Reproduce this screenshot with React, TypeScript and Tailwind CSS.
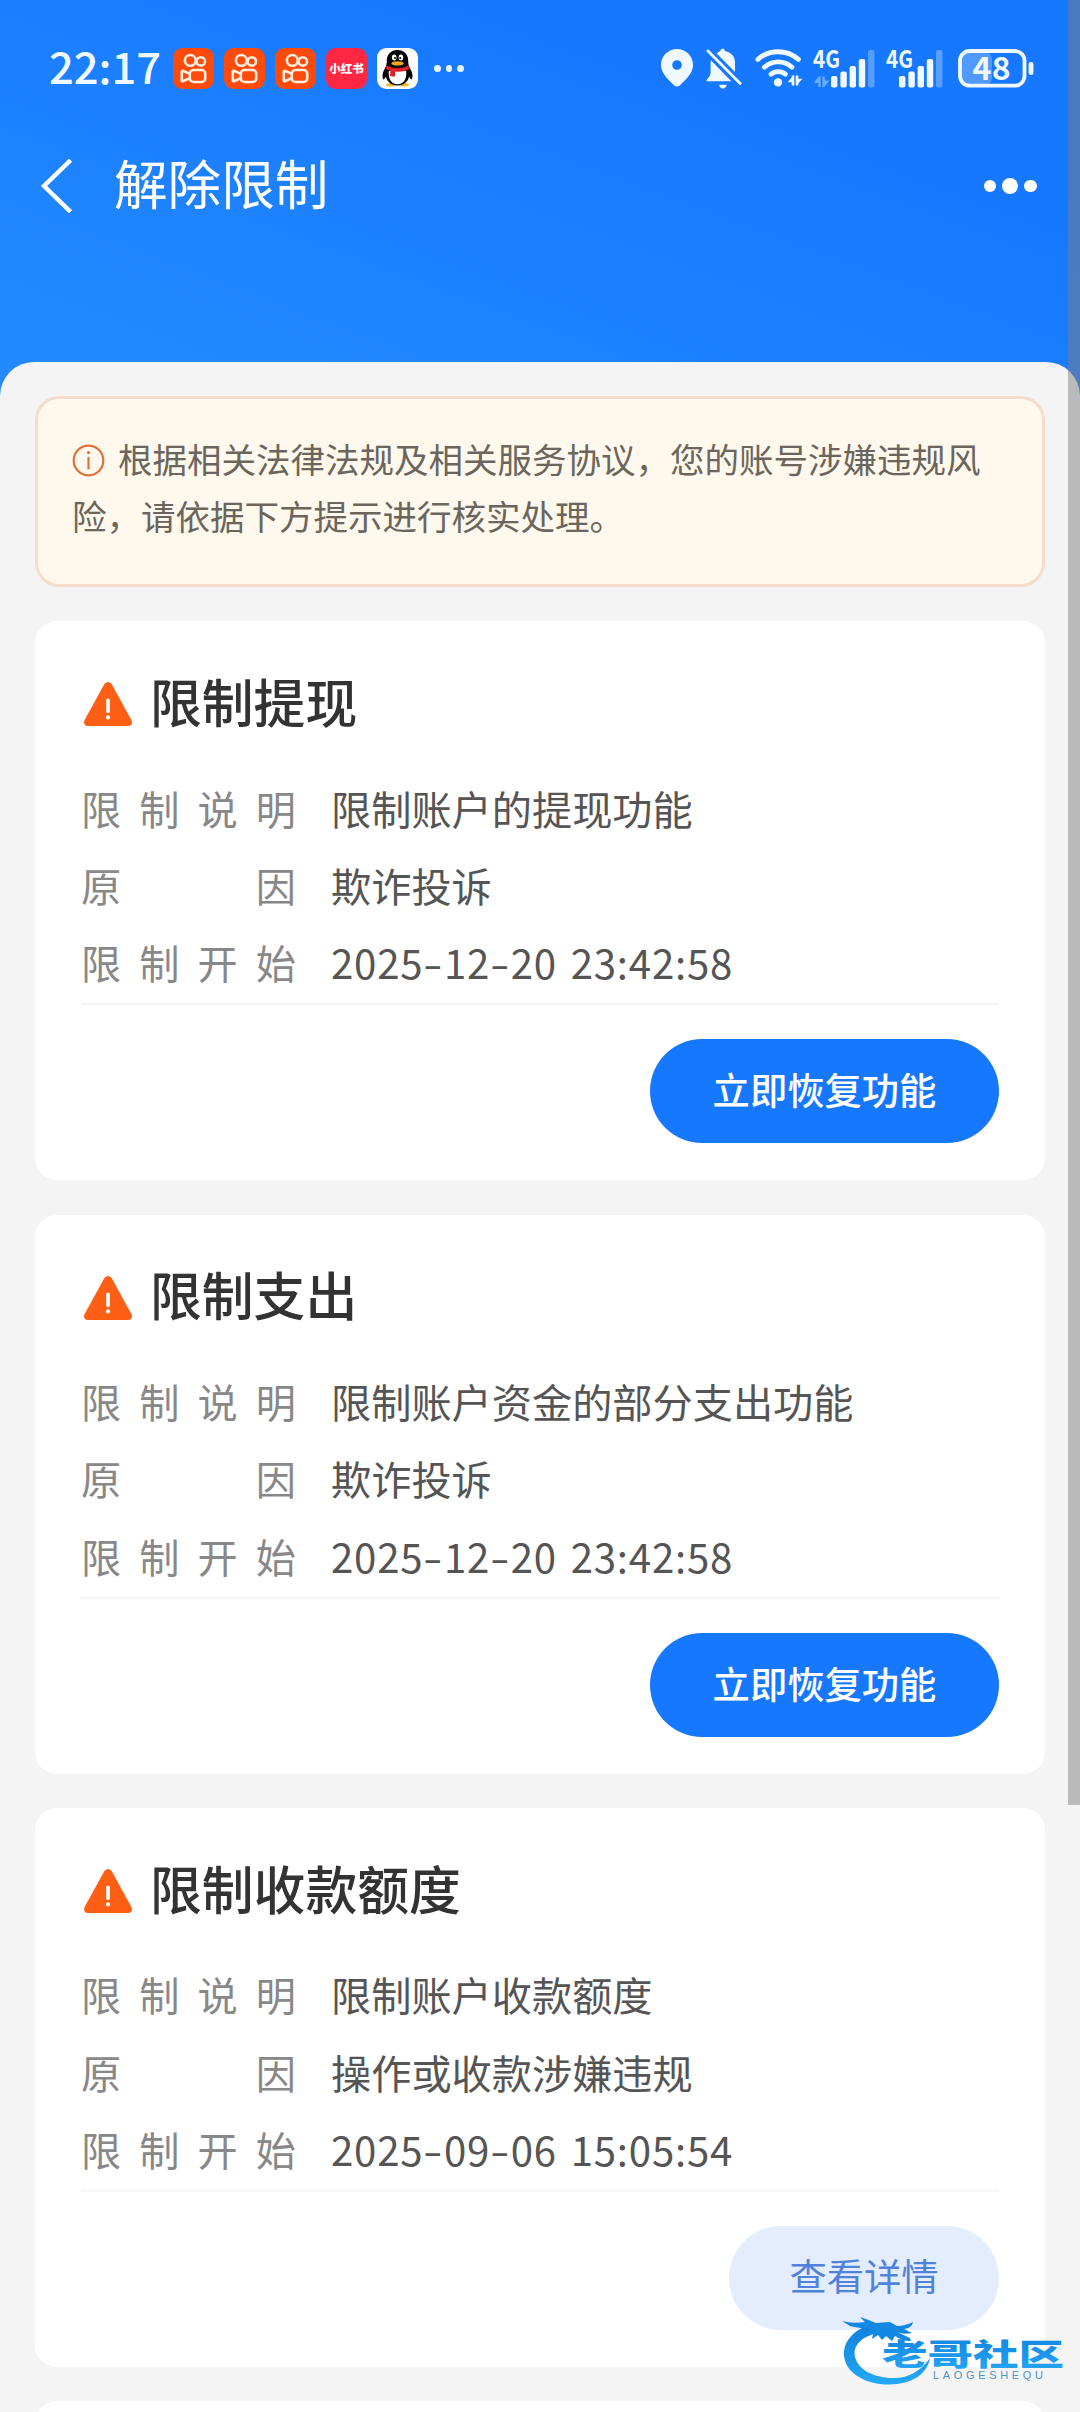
import React from 'react';

const FONT = "font-['Noto_Sans_CJK_SC','Noto_Sans',sans-serif]";
const PAGE_CLASSES = `relative w-[1080px] h-[2412px] overflow-hidden bg-[#f4f4f4] ${FONT}`;
const HEADER_CLASSES = 'h-[400px] bg-linear-to-tr from-[#2389ff] from-10% to-[#1677ff] to-75%';
const CARD_CLASSES = 'h-[559.2px] shrink-0 rounded-[22px] bg-white pl-[46px] pr-[46px] flex flex-col';
const PRIMARY_BUTTON = 'h-[104px] w-[349px] pb-[2px] rounded-full bg-[#1677ff] text-white text-[37.3px] font-medium';
const PLAIN_BUTTON = 'h-[104px] w-[270px] pb-[4px] rounded-full bg-[#e3edfe] text-[#5082db] text-[37.3px]';

type Restriction = {
  title: string;
  desc: string;
  reason: string;
  start: string;
  action: string;
  primary: boolean;
};

const RESTRICTIONS: Restriction[] = [
  {
    title: '限制提现',
    desc: '限制账户的提现功能',
    reason: '欺诈投诉',
    start: '2025-12-20 23:42:58',
    action: '立即恢复功能',
    primary: true,
  },
  {
    title: '限制支出',
    desc: '限制账户资金的部分支出功能',
    reason: '欺诈投诉',
    start: '2025-12-20 23:42:58',
    action: '立即恢复功能',
    primary: true,
  },
  {
    title: '限制收款额度',
    desc: '限制账户收款额度',
    reason: '操作或收款涉嫌违规',
    start: '2025-09-06 15:05:54',
    action: '查看详情',
    primary: false,
  },
];

const KuaishouIcon = () => (
  <svg width="41" height="41" viewBox="0 0 41 41" fill="none" stroke="#ffeedd" strokeWidth="2.6">
    <rect width="41" height="41" rx="9.5" fill="#fe4a0b" stroke="none" />
    <circle cx="17.3" cy="12.4" r="5.4" />
    <circle cx="27.8" cy="13.4" r="4.2" />
    <rect x="16.8" y="22" width="15.4" height="12" rx="3.6" />
    <path d="M16.5 25.6L9.8 22.8Q8.8 22.6 8.8 23.8V32.4Q8.8 33.6 9.8 33.2L16.5 30.2" strokeLinejoin="round" />
  </svg>
);

const XhsIcon = () => (
  <div className="size-[41px] rounded-[9.5px] bg-[#ff2742] flex items-center justify-center">
    <span className="text-white text-[11.5px] leading-none font-black whitespace-nowrap">小红书</span>
  </div>
);

const QQIcon = () => (
  <svg width="41" height="41" viewBox="0 0 41 41">
    <rect width="41" height="41" rx="9.5" fill="#fff" />
    <ellipse cx="14" cy="36.8" rx="5" ry="1.8" fill="#f5b52a" />
    <ellipse cx="27" cy="36.8" rx="5" ry="1.8" fill="#f5b52a" />
    <path d="M20.5 2C14 2 9.8 6.5 9.8 12.5C9.8 16 9.3 18 7.6 21C5.6 24.5 4.9 28 6 31C6.6 32.4 8 30 9 28.8C9.8 33.5 14 37.5 20.5 37.5S31.2 33.5 32 28.8C33 30 34.4 32.4 35 31C36.1 28 35.4 24.5 33.4 21C31.7 18 31.2 16 31.2 12.5C31.2 6.5 27 2 20.5 2Z" fill="#050505" />
    <path d="M11.8 23C11 31 14.5 36.3 20.5 36.3S30 31 29.2 23Z" fill="#fff" />
    <path d="M9.6 17.6C15.5 21 25.5 21 31.4 17.6L32.2 21C29 23.3 24 24.2 18 23.6V28.3C16 28.8 14.5 28.5 13 27.8L13.4 22.8C11.4 22.2 10 21.6 9 20.8Z" fill="#e2202c" />
    <ellipse cx="17.2" cy="9.6" rx="2.3" ry="3" fill="#fff" />
    <ellipse cx="23.9" cy="9.6" rx="2.3" ry="3" fill="#fff" />
    <circle cx="18" cy="10" r="1" fill="#000" />
    <circle cx="23.2" cy="10" r="1" fill="#000" />
    <ellipse cx="20.5" cy="15.4" rx="6.2" ry="2.2" fill="#f5a71c" />
  </svg>
);

const PinIcon = () => (
  <svg width="32" height="38" viewBox="0 0 32 38" fill="#f0f9ff">
    <path fillRule="evenodd" d="M16 0C7.2 0 0 7 0 15.8C0 24.5 7.5 31 13.2 36.4Q16 38.6 18.8 36.4C24.5 31 32 24.5 32 15.8C32 7 24.8 0 16 0ZM16 11.2A4.8 4.8 0 1 1 16 20.8A4.8 4.8 0 1 1 16 11.2Z" />
  </svg>
);

const BellOffIcon = () => (
  <svg width="36" height="41" viewBox="0 0 36 41" fill="#f0f9ff">
    <path d="M5.2 12.4L25.4 33.2H1.2Q0 33.2 0.6 31.8Q4.6 27.9 4.6 24V14Z" />
    <path d="M10.6 5.6Q12.6 3.4 14.2 2.9Q14.6 0.4 16.6 0.4T19 2.9C25.4 4.2 29 8.6 29 14.4V24Z" />
    <path d="M13.2 36.8H20.6Q20 40.6 16.9 40.6T13.2 36.8Z" />
    <path d="M2 3L34.2 35.4" stroke="#f0f9ff" strokeWidth="2.8" strokeLinecap="round" />
  </svg>
);

const WifiIcon = () => (
  <svg width="48" height="38" viewBox="0 0 48 38" fill="none" stroke="#f0f9ff" strokeWidth="4.8" strokeLinecap="round">
    <path d="M2.8 10.4C14 0.2 32 0.2 43.4 10.4" />
    <path d="M9.4 18.2C17 11 29.4 11 37 18.2" />
    <path d="M16 25.2C20 21.8 26.4 21.8 30.4 25.2" />
    <circle cx="23" cy="33.4" r="4.2" fill="#f0f9ff" stroke="none" />
    <path d="M38 26.6V36.4M42 36.4V26.6" strokeWidth="2.6" strokeLinecap="butt" />
    <path d="M32.6 33.2L38 27V33.2ZM47.4 29.8L42 36V29.8Z" fill="#f0f9ff" stroke="none" />
  </svg>
);

// bars share one shape, the first SIM also shows the (idle) data arrows
const SignalIcon = ({ arrows }: { arrows?: boolean }) => (
  <svg className="overflow-visible" width={arrows ? 62 : 57} height="39" viewBox={arrows ? '0 0 62 39' : '0 0 57 39'} fill="#f0f9ff">
    <text x="0" y="19.4" fontSize="24.5" fontWeight="700" textLength="27" lengthAdjust="spacingAndGlyphs">4G</text>
    {arrows && (
      <path opacity="0.4" d="M0.8 34L5.6 27.4H7.6V38H5.2V34ZM9.4 27.4H11.8V31.4H16.2L11.4 38H9.4Z" />
    )}
    <g transform={arrows ? undefined : 'translate(-5 0)'}>
      <rect x="18" y="27" width="6.4" height="11.4" rx="2" />
      <rect x="27.4" y="22.6" width="6.4" height="15.8" rx="2" />
      <rect x="36.6" y="17" width="6.4" height="21.4" rx="2" />
      <rect x="45.8" y="10" width="6.4" height="28.4" rx="2" />
      <rect x="55" y="1" width="6.4" height="37.4" rx="2" opacity="0.3" />
    </g>
  </svg>
);

const BatteryIcon = () => (
  <svg className="overflow-visible" width="77" height="39" viewBox="0 0 77 39">
    <rect x="3" y="3" width="31" height="33" rx="7" fill="#fff" fillOpacity="0.25" />
    <rect x="2" y="2" width="64.5" height="34.6" rx="9.5" fill="none" stroke="#f0f9ff" strokeWidth="3.8" />
    <rect x="70.6" y="13" width="4.8" height="13" rx="2.2" fill="#f0f9ff" />
    <text x="33.6" y="31" fontSize="32" fontWeight="700" fill="#f0f9ff" textAnchor="middle" textLength="38">48</text>
  </svg>
);

const StatusBar = () => (
  <div className="h-[137px] pl-[49px] flex items-center">
    <span className="w-[124px] pb-[6px] text-[43.5px] leading-none font-medium text-[#f0f9ff]">22:17</span>
    <div className="flex gap-[10px]">
      <KuaishouIcon />
      <KuaishouIcon />
      <KuaishouIcon />
      <XhsIcon />
      <QQIcon />
    </div>
    <div className="ml-[16px] flex gap-[5px]">
      <i className="size-[6.5px] rounded-full bg-[#e6f4ff]" />
      <i className="size-[6.5px] rounded-full bg-[#e6f4ff]" />
      <i className="size-[6.5px] rounded-full bg-[#e6f4ff]" />
    </div>
    <div className="ml-auto pr-[45px] pb-px flex items-center">
      <PinIcon />
      <div className="ml-[13px]"><BellOffIcon /></div>
      <div className="ml-[13px]"><WifiIcon /></div>
      <div className="ml-[10px]"><SignalIcon arrows /></div>
      <div className="ml-[11px]"><SignalIcon /></div>
      <div className="ml-[15px]"><BatteryIcon /></div>
    </div>
  </div>
);

const NavBar = () => (
  <div className="h-[98px] pl-[40px] pr-[43px] flex items-center">
    <svg width="33" height="54" viewBox="0 0 33 54" fill="none" stroke="#fff" strokeWidth="4.4">
      <path d="M30.6 1.2L4 27L30.6 52.8" />
    </svg>
    <h1 className="ml-[41px] pb-[9px] text-[53.6px] leading-none text-white">解除限制</h1>
    <div className="ml-auto flex items-center gap-[6px]">
      <i className="size-[12.6px] rounded-full bg-white" />
      <i className="size-[16px] rounded-full bg-white" />
      <i className="size-[12.6px] rounded-full bg-white" />
    </div>
  </div>
);

const Notice = () => (
  <section className="h-[191px] shrink-0 rounded-[24px] border-[3px] border-[#f6dccb] bg-[#fff8ec] pl-[34px] pr-[30px] pt-[31px]">
    <p className="text-[34.5px] leading-[57px] text-[#6a665d]">
      <svg className="inline-block align-[-3.5px] mr-[13px]" width="33" height="33" viewBox="0 0 33 33" fill="none" stroke="#e2703a" strokeWidth="2.2">
        <circle cx="16.5" cy="16.5" r="14.8" />
        <path d="M16.5 13V25.4" />
        <circle cx="16.5" cy="8.6" r="1.6" fill="#e2703a" stroke="none" />
      </svg>
      根据相关法律法规及相关服务协议，您的账号涉嫌违规风
      <br />
      险，请依据下方提示进行核实处理。
    </p>
  </section>
);

const WarningIcon = () => (
  <svg width="50" height="44" viewBox="0 0 50 44">
    <path d="M21.4 2Q25 -2 28.6 2L48.4 38Q50.4 43.6 45 44H5Q-0.4 43.6 1.6 38Z" fill="#ff5f14" />
    <rect x="23.2" y="16.4" width="3.6" height="14.6" rx="1.6" fill="#fff" />
    <circle cx="25" cy="35.4" r="2.1" fill="#fff" />
  </svg>
);

// hyphens are set wide, digits stay tight
const DateText = ({ value }: { value: string }) => (
  <span className="tracking-[0.8px] [word-spacing:4px]">
    {value.split('-').map((part, i) => (
      <React.Fragment key={i}>
        {i > 0 && <span className="inline-block w-[20.5px] text-center scale-x-140">-</span>}
        {part}
      </React.Fragment>
    ))}
  </span>
);

const Row = ({ label, children }: { label: string; children: React.ReactNode }) => (
  <div className="h-[77.3px] flex items-center text-[40.2px] leading-none">
    <dt className="w-[215px] flex justify-between text-[#888]">
      {label.split('').map((c, i) => <span key={i}>{c}</span>)}
    </dt>
    <dd className="ml-[35px] text-[#555]">{children}</dd>
  </div>
);

const Card = ({ item }: { item: Restriction }) => (
  <section className={CARD_CLASSES}>
    <div className="mt-[57px] h-[52px] pl-[2px] flex items-center">
      <WarningIcon />
      <h2 className="ml-[17px] pb-[7px] text-[51.8px] leading-none font-medium text-[#333]">{item.title}</h2>
    </div>
    <dl className="mt-[39px] h-[234px]">
      <Row label="限制说明">{item.desc}</Row>
      <Row label="原因">{item.reason}</Row>
      <Row label="限制开始"><DateText value={item.start} /></Row>
    </dl>
    <div className="border-t-2 border-[#f5f5f5] pt-[34px] flex justify-end">
      <button className={item.primary ? PRIMARY_BUTTON : PLAIN_BUTTON}>{item.action}</button>
    </div>
  </section>
);

const Watermark = () => (
  <svg className="absolute left-[840px] top-[2308px]" width="230" height="84" viewBox="0 0 230 84">
    <defs>
      <linearGradient id="wm" x1="0" y1="0" x2="0" y2="1">
        <stop offset="0" stopColor="#0f7fdc" />
        <stop offset="1" stopColor="#25a9f7" />
      </linearGradient>
    </defs>
    {/* dragon ring and head */}
    <path d="M30 17C13 22 3 34 4 48C6 66 27 77 50 76.5C71 76 87 67 90 50C81 63 68 70.5 53 70C33 70 16 61 14.5 46C14 36 23 28 38 25Z" fill="url(#wm)" />
    <path d="M2 13Q12 16 25 14L20 9Q29 12 36 15L50 14L57 18Q65 18 73 14Q72 20 64 21L72 25Q63 27 57 24L70 30L71 33Q62 33 55 28L52 33L46 28L42 32L38 27L32 31L33 26L24 26L30 21Q18 20 10 18Z" fill="#1388e3" />
    <text x="42" y="57" fontSize="30" fontWeight="900" fill="url(#wm)" textLength="182" lengthAdjust="spacingAndGlyphs">老哥社区</text>
    <text x="93" y="71" fontSize="11" fill="#4f94c6" textLength="110" className="font-['Liberation_Sans',sans-serif]">LAOGESHEQU</text>
  </svg>
);

const App = () => {
  return (
    <div className={PAGE_CLASSES}>
      <header className={HEADER_CLASSES}>
        <StatusBar />
        <NavBar />
      </header>
      <main className="relative -mt-[38px] h-[2050px] rounded-t-[34px] bg-[#f4f4f4] px-[35px] pt-[34px] flex flex-col gap-[34.2px]">
        <Notice />
        {RESTRICTIONS.map((item) => <Card key={item.title} item={item} />)}
        <section className={CARD_CLASSES} />
      </main>
      {/* scrollbar thumb */}
      <div className="absolute right-0 top-0 w-[12px] h-[1805px] bg-[rgba(126,126,126,0.49)]" />
      <Watermark />
    </div>
  );
};

export default App;
